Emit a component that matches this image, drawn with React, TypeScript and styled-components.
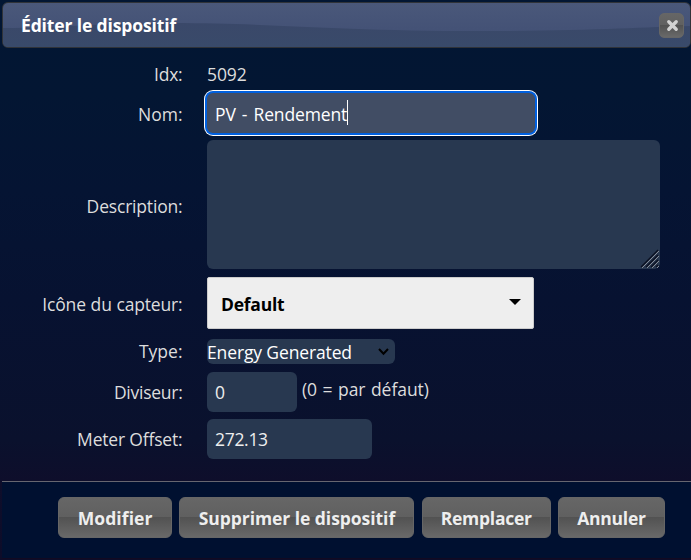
import React from "react";
import styled, { createGlobalStyle } from "styled-components";

const Global = createGlobalStyle`
  *, *::before, *::after { box-sizing: border-box; }
  body {
    margin: 0;
    overflow: hidden;
    background: #0d0e2a;
    font-family: "Open Sans", "Noto Sans", sans-serif;
  }
`;

const Dialog = styled.div`
  width: 691px;
  height: 560px;
  padding: 2px 0 0 2px;
  display: flex;
  flex-direction: column;
  background: linear-gradient(180deg, #021633 0, #031633 95px, #051433 190px, #071231 300px, #0a112d 440px, #0e0e2b 480px, #0d0c29 100%);
  color: #dddddd;
  font-size: 17.5px;
`;

/* $ls: letter spacing, $ws: word spacing, $top / $bottom: optical centring */
const Fit = styled.span<{ $ls?: number; $ws?: number; $top?: number; $bottom?: number }>`
  display: inline-block;
  letter-spacing: ${(p) => p.$ls ?? 0}px;
  word-spacing: ${(p) => p.$ws ?? 0}px;
  padding-top: ${(p) => p.$top ?? 0}px;
  padding-bottom: ${(p) => p.$bottom ?? 0}px;
  white-space: pre;
`;

const TitleBar = styled.header`
  position: relative;
  flex: none;
  height: 46px;
  width: 689px;
  padding: 0 6px 0 18px;
  display: flex;
  align-items: center;
  justify-content: space-between;
  border: 1px solid #303338;
  border-radius: 6px;
  overflow: hidden;
  background: linear-gradient(180deg, #4a587a 0, #445276 26px, #3f4f70 100%);
`;

const Wave = styled.svg`
  position: absolute;
  inset: 0;
  width: 100%;
  height: 100%;
`;

const Title = styled.h1`
  position: relative;
  margin: 0;
  font-size: 17.5px;
  line-height: 24px;
  font-weight: 700;
  color: #ffffff;
`;

const gloss = "linear-gradient(180deg, #666666 0, #606060 49%, #525252 50%, #696969 100%)";

const CloseButton = styled.button`
  position: relative;
  width: 25px;
  height: 25px;
  padding: 1px 0 0 2px;
  display: flex;
  align-items: center;
  justify-content: center;
  border: 1px solid #666666;
  border-radius: 5px;
  background: ${gloss};
`;

const Form = styled.main`
  flex: none;
  height: 433px;
  padding-top: 14px;
`;

const Row = styled.div<{ $h: number; $gap?: number }>`
  display: grid;
  grid-template-columns: 180.5px 1fr;
  column-gap: 24.5px;
  height: ${(p) => p.$h}px;
  margin-bottom: ${(p) => p.$gap ?? 0}px;
  align-items: center;
`;

const Label = styled.label`
  display: flex;
  justify-content: flex-end;
  line-height: 24px;
`;

const Value = styled.div`
  display: flex;
  align-items: center;
  height: 100%;
  line-height: 24px;
`;

const Field = styled.div<{ $w: number; $focus?: boolean }>`
  width: ${(p) => p.$w}px;
  height: 40px;
  padding-left: 8px;
  display: flex;
  align-items: center;
  border-radius: 6px;
  color: ${(p) => (p.$focus ? "#ffffff" : "#eeeeee")};
  background: ${(p) => (p.$focus ? "#414d64" : "#283850")};
  box-shadow: ${(p) => (p.$focus ? "0 0 0 2px #0060df, 0 0 0 3px #ffffff" : "none")};
`;

const Caret = styled.span`
  width: 1px;
  height: 25px;
  margin-bottom: 1px;
  background: #ffffff;
`;

const TextArea = styled.div`
  width: 453px;
  height: 129px;
  display: flex;
  align-items: flex-end;
  justify-content: flex-end;
  border-radius: 6px;
  background: #283850;
`;

const IconPicker = styled.div`
  width: 327px;
  height: 52px;
  padding: 0 12px 0 13px;
  display: flex;
  align-items: center;
  justify-content: space-between;
  border: 1px solid #cccccc;
  border-radius: 2px;
  background: #eeeeee;
  color: #000000;
  font-weight: 700;
`;

const TypeSelect = styled.div`
  width: 188px;
  height: 25px;
  padding: 1px 5px 0 0;
  display: flex;
  align-items: center;
  justify-content: space-between;
  border-radius: 6px;
  background: #283850;
  color: #ffffff;
  line-height: 24px;
`;

const Hint = styled.span`
  margin: 0 0 6px 5px;
`;

const Footer = styled.footer`
  flex: none;
  height: 78px;
  padding: 15px 26px 0 0;
  display: flex;
  justify-content: flex-end;
  gap: 7.3px;
  border-top: 1px solid #666670;
  border-bottom: 1px solid #120a22;
  background: #001030;
`;

const Button = styled.button<{ $w: number }>`
  width: ${(p) => p.$w}px;
  height: 41px;
  padding: 0;
  border: 1px solid #666666;
  border-radius: 6px;
  background: ${gloss};
  color: #eeeeee;
  font: 700 17.5px/24px "Open Sans", "Noto Sans", sans-serif;
`;

export default function App() {
  return (
    <>
      <Global />
      <Dialog>
        <TitleBar>
          <Wave viewBox="0 0 687 44" preserveAspectRatio="none">
            <defs>
              <linearGradient id="shade" x1="0" y1="0" x2="0" y2="1">
                <stop offset="0" stopColor="#3a4869" />
                <stop offset="1" stopColor="#394a6a" />
              </linearGradient>
            </defs>
            <path d="M0 25 C60 25 90 20 170 20 C270 20 330 28 480 28 C590 28 640 24 687 23 V44 H0 Z" fill="url(#shade)" />
          </Wave>
          <Title><Fit $ls={-0.13}>Éditer le dispositif</Fit></Title>
          <CloseButton aria-label="Fermer">
            <svg width="13" height="13" viewBox="0 0 13 13">
              <path d="M2.8 2.8 L10.2 10.2 M10.2 2.8 L2.8 10.2" stroke="#d2d2d2" strokeWidth="3.4" strokeLinecap="round" />
            </svg>
          </CloseButton>
        </TitleBar>
        <Form>
          <Row $h={26} $gap={5}>
            <Label><Fit $ls={-0.2} $bottom={2}>Idx:</Fit></Label>
            <Value><Fit $ls={-0.1} $bottom={2}>5092</Fit></Value>
          </Row>
          <Row $h={40} $gap={7}>
            <Label><Fit $top={1}>Nom:</Fit></Label>
            <Value><Field $w={328} $focus><Fit $ws={1.8} $ls={-0.15} $top={1}>PV - Rendement</Fit><Caret /></Field></Value>
          </Row>
          <Row $h={129} $gap={8}>
            <Label><Fit $ls={-0.18} $top={2}>Description:</Fit></Label>
            <Value>
              <TextArea>
                <svg width="20" height="20" viewBox="0 0 20 20">
                  <g stroke="#0b1020" strokeWidth="1.2">
                    <path d="M1 18 L18 1 M6 18 L18 6 M11 18 L18 11 M16 18 L18 16" />
                  </g>
                  <g stroke="#878c96" strokeWidth="1">
                    <path d="M2 19 L19 2 M7 19 L19 7 M12 19 L19 12 M17 19 L19 17" />
                  </g>
                </svg>
              </TextArea>
            </Value>
          </Row>
          <Row $h={52} $gap={10}>
            <Label><Fit $ls={-0.17} $ws={0.4} $top={2}>Icône du capteur:</Fit></Label>
            <Value>
              <IconPicker>
                <Fit $ls={-0.25} $top={2}>Default</Fit>
                <svg width="12" height="12" viewBox="0 0 12 12"><path d="M0 2 H12 L6 8 Z" fill="#000" /></svg>
              </IconPicker>
            </Value>
          </Row>
          <Row $h={25} $gap={8}>
            <Label><Fit $bottom={1}>Type:</Fit></Label>
            <Value>
              <TypeSelect>
                <Fit $ls={-0.13}>Energy Generated</Fit>
                <svg width="13" height="10" viewBox="0 0 13 10"><path d="M2 2 L6.5 6.8 L11 2" fill="none" stroke="#000" strokeWidth="2" /></svg>
              </TypeSelect>
            </Value>
          </Row>
          <Row $h={40} $gap={7}>
            <Label><Fit $ls={-0.26}>Diviseur:</Fit></Label>
            <Value><Field $w={90}><Fit>0</Fit></Field><Hint><Fit $ls={-0.05} $ws={1}>(0 = par défaut)</Fit></Hint></Value>
          </Row>
          <Row $h={40}>
            <Label><Fit $ls={-0.18}>Meter Offset:</Fit></Label>
            <Value><Field $w={165}><Fit $ls={-0.3}>272.13</Fit></Field></Value>
          </Row>
        </Form>
        <Footer>
          <Button $w={114}><Fit $ls={0.08}>Modifier</Fit></Button>
          <Button $w={235}><Fit $ls={-0.05}>Supprimer le dispositif</Fit></Button>
          <Button $w={129}><Fit $ls={-0.25}>Remplacer</Fit></Button>
          <Button $w={107}><Fit $ls={-0.25}>Annuler</Fit></Button>
        </Footer>
      </Dialog>
    </>
  );
}
